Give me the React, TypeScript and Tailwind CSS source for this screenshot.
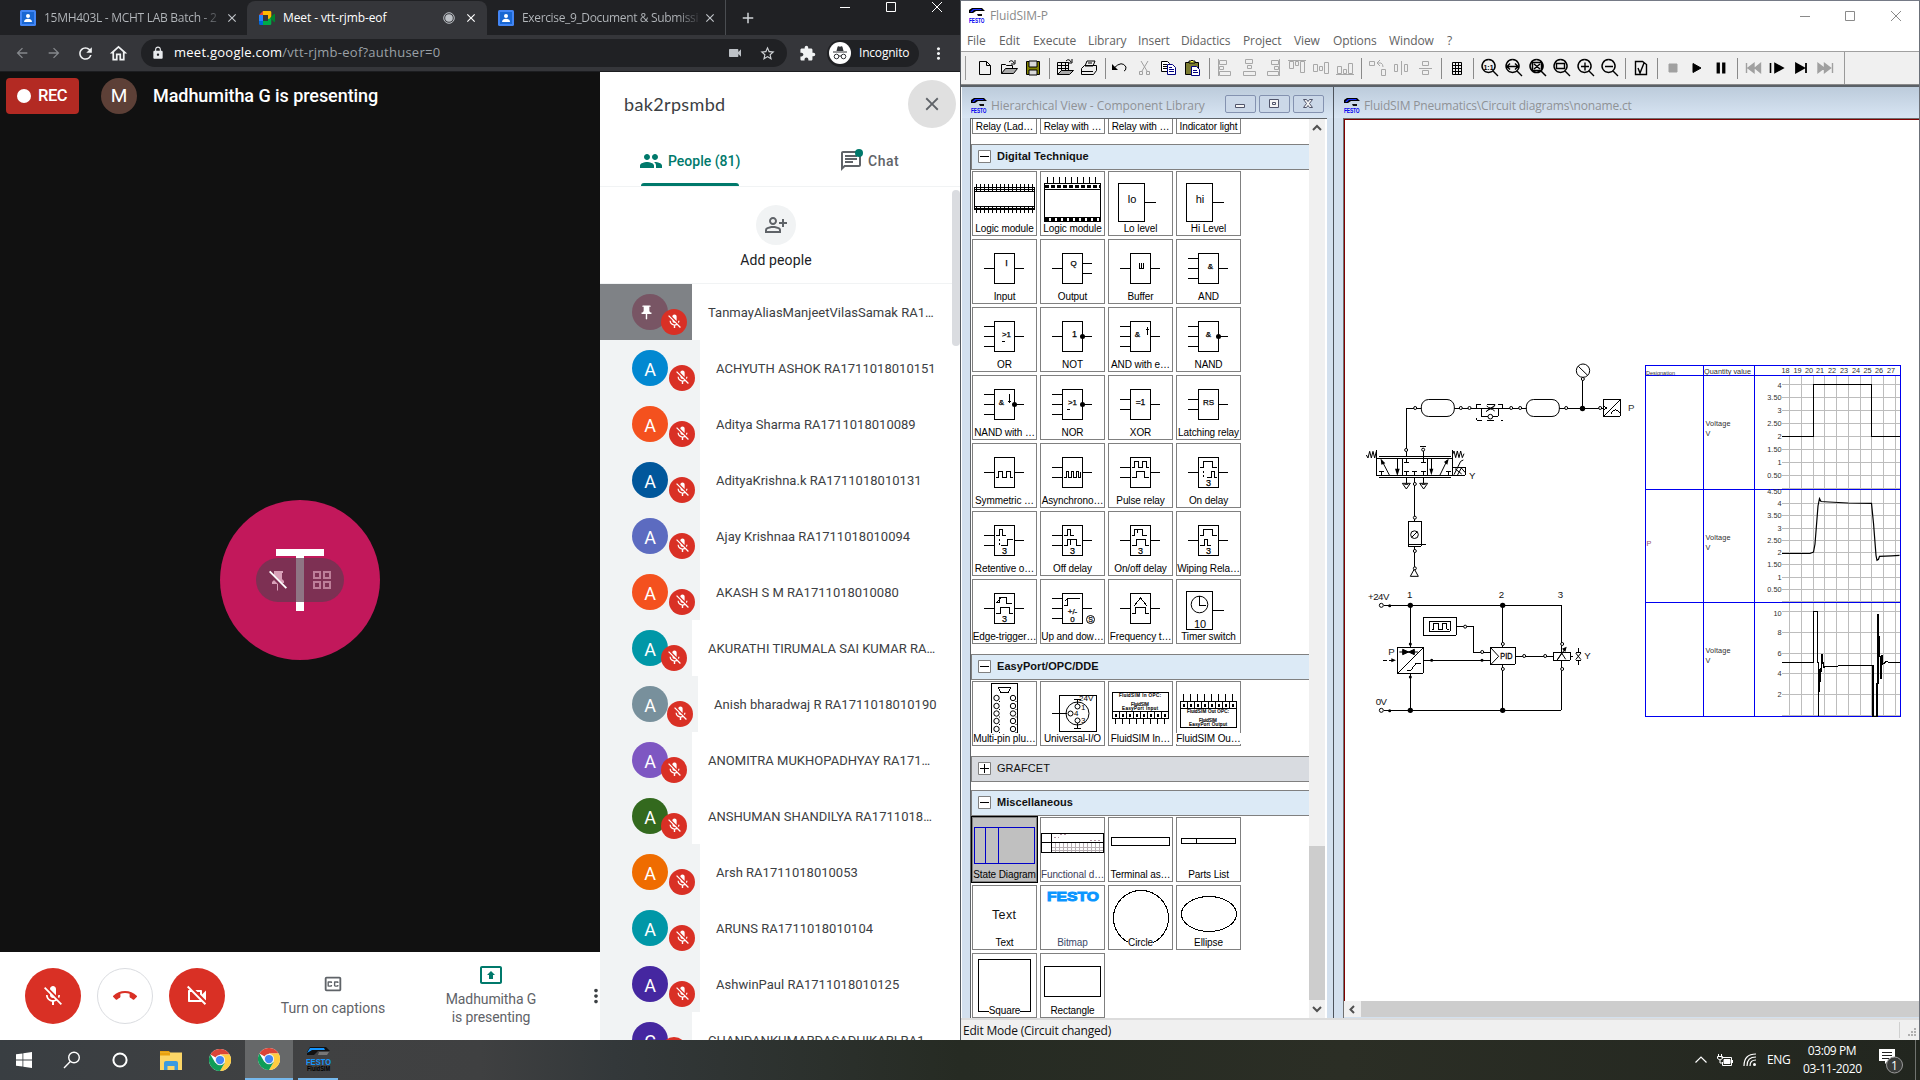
import React from 'react';
import {
  MdMicOff, MdPeople, MdCallEnd, MdOutlineVideocamOff, MdOutlineClosedCaption, MdOutlinePersonAddAlt,
  MdOutlineChat, MdExtension, MdStarBorder, MdLock, MdPushPin, MdClose, MdArrowBack, MdArrowForward,
  MdRefresh, MdOutlineHome, MdMoreVert, MdVideocam, MdAdd, MdOutlinePresentToAll,
} from 'react-icons/md';

/* ---------- shared logos ---------- */

function FestoLogo({ className = '' }: { className?: string }) {
  return (
    <svg className={`shrink-0 ${className}`} width="16" height="16" viewBox="0 0 16 16">
      <path d="M3 0h10l3 3h-9l-3 2H0v-3z" fill="#000" />
      <path d="M4 1h8l1 1H5l-2 2H1z" fill="#1a2fff" />
      <path d="M8 6h5v2H9z" fill="#111" />
      <text x="0" y="14.500" fontFamily="Liberation Sans" fontSize="7" fontWeight="700" fill="#0000f0" textLength="15.500" lengthAdjust="spacingAndGlyphs">FESTO</text>
    </svg>
  );
}

function ChromeLogo() {
  return (
    <svg width="22" height="22" viewBox="0 0 24 24">
      <circle cx="12" cy="12" r="12" fill="#fff" />
      <path d="M12 12L1.6 6A12 12 0 0 1 22.4 6H12z" fill="#db4437" />
      <path d="M22.4 6A12 12 0 0 1 12 24L17.2 15L12 6z" fill="#ffcd40" />
      <path d="M1.6 6A12 12 0 0 0 12 24L17.2 15L6.8 15z" fill="#0f9d58" />
      <circle cx="12" cy="12" r="5.6" fill="#f1f1f1" />
      <circle cx="12" cy="12" r="4.5" fill="#4285f4" />
    </svg>
  );
}

function ClassroomLogo() {
  return (
    <svg width="16" height="16" viewBox="0 0 16 16" className="shrink-0">
      <rect width="16" height="16" rx="1.5" fill="#4285f4" />
      <rect x="2" y="2" width="12" height="12" fill="#1967d2" />
      <circle cx="8" cy="6" r="2" fill="#fff" />
      <path d="M4 12c0-2.400 2-3.300 4-3.300s4 .9 4 3.300z" fill="#fff" />
    </svg>
  );
}

function MeetLogo() {
  return (
    <svg width="16" height="14" viewBox="0 0 16 14" className="shrink-0">
      <path d="M0 4l4-4v4z" fill="#ea4335" />
      <path d="M0 4h4v6H0z" fill="#2684fc" />
      <path d="M0 10h4v4H1.500Q0 14 0 12.500z" fill="#0066da" />
      <path d="M4 0h7q1.300 0 1.300 1.300V7L9 9V4H4z" fill="#ffba00" />
      <path d="M4 14v-4h5V8l3.300-1v5.700q0 1.300-1.300 1.300z" fill="#00ac47" />
      <path d="M11 7l4-4q1-.5 1 .5v7q0 1-1 .5z" fill="#00832d" />
    </svg>
  );
}

/* ---------- browser ---------- */

function Tab({ icon, title, className, fade = false }: { icon: React.ReactNode; title: string; className: string; fade?: boolean }) {
  return (
    <div className={`flex items-center ${className}`}>
      {icon}
      <span className={`ml-2 flex-1 overflow-hidden whitespace-nowrap ${fade ? 'bg-gradient-to-r from-[#b4b8bc] from-88% to-[#3a3c40] bg-clip-text text-transparent' : ''}`}>{title}</span>
    </div>
  );
}

function BrowserHeader() {
  return (
    <div className="h-[72px] shrink-0 bg-[#202124] font-['Open_Sans',sans-serif] text-[12px] tracking-[-0.35px] text-[#9aa0a6]">
      <div className="flex h-[35px]">
        <div className="flex w-[247px] items-center pl-5 pr-[7px]">
          <Tab fade className="w-[200px] tracking-[-0.28px]" icon={<ClassroomLogo />} title="15MH403L - MCHT LAB Batch - 2" />
          <MdClose className="ml-[5px] text-[#c0c4c8]" size={14} />
        </div>
        <div className="mt-px flex w-[240px] items-center rounded-t-lg bg-[#35363a] pl-[12px] text-white">
          <Tab className="w-[184px] tracking-[-0.1px]" icon={<MeetLogo />} title="Meet - vtt-rjmb-eof" />
          <svg width="12" height="12" viewBox="0 0 12 12"><circle cx="6" cy="6" r="5.300" fill="none" stroke="#bdc1c6" /><circle cx="6" cy="6" r="3.800" fill="#bdc1c6" /></svg>
          <MdClose className="ml-[9px]" size={14} />
        </div>
        <div className="flex w-[239px] items-center border-r border-[#4a4d51] pl-[11px]">
          <Tab fade className="w-[200px]" icon={<ClassroomLogo />} title="Exercise_9_Document &amp; Submissi" />
          <MdClose className="ml-[5px] text-[#c0c4c8]" size={14} />
        </div>
        <MdAdd className="ml-[13px] mt-[9px] text-[#d0d3d6]" size={18} />
        <svg className="ml-[83px] mt-[1px]" width="105" height="14" viewBox="0 0 105 14" stroke="#fff" fill="none">
          <path d="M0 6.500h10M46.500 1.500h9v9h-9zM92 1l10 10M102 1l-10 10" />
        </svg>
      </div>
      <div className="flex h-[37px] items-center border-b border-[#1c1d20] bg-[#35363a] pl-[14px]">
        <MdArrowBack size={16} className="text-[#85888c]" />
        <MdArrowForward size={16} className="ml-4 text-[#85888c]" />
        <MdRefresh size={19} className="ml-[14px] text-[#f1f3f4]" />
        <MdOutlineHome size={21} className="ml-[13px] text-[#f1f3f4]" />
        <div className="ml-[12px] flex h-7 w-[646px] items-center rounded-full bg-[#202124] pl-[10px] pr-[11px]">
          <MdLock size={14} className="text-[#e8eaed]" />
          <span className="ml-[9px] flex-1 text-[13px] tracking-[0.25px] text-[#9aa0a6]"><span className="text-white">meet.google.com</span>/vtt-rjmb-eof?authuser=0</span>
          <MdVideocam size={16} className="text-[#bdc1c6]" />
          <MdStarBorder size={17} className="ml-[16px] text-[#d0d3d6]" />
        </div>
        <MdExtension size={17} className="ml-[12px] text-[#f1f3f4]" />
        <div className="ml-[11px] flex h-[27px] w-[92px] items-center rounded-full bg-[#202124] pl-[2px] text-white">
          <svg width="22" height="22" viewBox="0 0 22 22">
            <circle cx="11" cy="11" r="11" fill="#fff" />
            <path d="M7.500 9l1-4q.3-1 1-.7l1.500.5 1.500-.5q.7-.3 1 .7l1 4zM4 9.500h14v1H4z" fill="#303236" />
            <g fill="none" stroke="#303236"><circle cx="7.500" cy="14.500" r="2.300" /><circle cx="14.500" cy="14.500" r="2.300" /><path d="M9.500 14h3" /></g>
          </svg>
          <span className="ml-2 tracking-[-0.2px]">Incognito</span>
        </div>
        <MdMoreVert size={19} className="ml-[10px] text-[#f1f3f4]" />
      </div>
    </div>
  );
}

const people: [string, string, string, string][] = [
  ['ACHYUTH ASHOK RA1711018010151', 'A', 'bg-[#0288d1]', 'w'],
  ['Aditya Sharma RA1711018010089', 'A', 'bg-[#f4511e]', 'w'],
  ['AdityaKrishna.k RA1711018010131', 'A', 'bg-[#01579b]', 'w'],
  ['Ajay Krishnaa RA1711018010094', 'A', 'bg-[#5c6bc0]', 'w'],
  ['AKASH S M RA1711018010080', 'A', 'bg-[#f4511e]', 'w'],
  ['AKURATHI TIRUMALA SAI KUMAR RA…', 'A', 'bg-[#0097a7]', 'n'],
  ['Anish bharadwaj R RA1711018010190', 'A', 'bg-[#78909c]', 'm'],
  ['ANOMITRA MUKHOPADHYAY RA171…', 'A', 'bg-[#7e57c2]', 'n'],
  ['ANSHUMAN SHANDILYA RA1711018…', 'A', 'bg-[#33691e]', 'n'],
  ['Arsh RA1711018010053', 'A', 'bg-[#ef6c00]', 'w'],
  ['ARUNS RA1711018010104', 'A', 'bg-[#0097a7]', 'w'],
  ['AshwinPaul RA1711018010125', 'A', 'bg-[#4527a0]', 'w'],
  ['CHANDANKUMARDASADHIKARI RA1…', 'C', 'bg-[#4527a0]', 'n'],
];

const slotWidth: Record<string, string> = { w: 'w-[100px]', m: 'w-[98px]', n: 'w-[92px]' };
const slotOverlap: Record<string, string> = { w: 'ml-[1px]', m: '-ml-[1px]', n: '-ml-[7px]' };

function MutedBadge({ className }: { className: string }) {
  return (
    <span className={`mt-[19px] flex size-[26px] shrink-0 items-center justify-center rounded-full bg-[#d93025] text-white ${className}`}>
      <MdMicOff size={17} />
    </span>
  );
}

function PeoplePanel() {
  return (
    <div className="flex w-[360px] shrink-0 flex-col overflow-hidden bg-white font-[Roboto,sans-serif]">
      <div className="flex h-[64px] shrink-0 items-center justify-between pl-6 pr-1">
        <span className="font-[Lato,sans-serif] text-[18px] tracking-[0.35px] text-[#3c4043]">bak2rpsmbd</span>
        <span className="flex size-12 items-center justify-center rounded-full bg-[#e0e0e0] text-[#5f6368]"><MdClose size={22} /></span>
      </div>
      <div className="flex h-[51px] shrink-0 border-b border-[#f1f3f4] text-[14px] font-medium">
        <div className="ml-[41px] flex w-[98px] flex-col text-[#00796b]">
          <div className="flex h-[47px] items-center whitespace-nowrap pt-[3px]">
            <MdPeople size={24} className="-ml-[2px] shrink-0" />
            <span className="ml-[5px]">People (81)</span>
          </div>
          <div className="h-[3px] rounded-t bg-[#00796b]" />
        </div>
        <div className="relative ml-[100px] flex h-[47px] items-center pt-[3px] text-[#5f6368]">
          <MdOutlineChat size={24} />
          <span className="absolute left-[16px] top-[13px] size-2 rounded-full bg-[#00796b]" />
          <span className="ml-[5px] tracking-[0.5px]">Chat</span>
        </div>
      </div>
      <div className="flex min-h-0 flex-1">
        <div className="w-[352px] overflow-hidden">
          <div className="flex h-[97px] flex-col items-center border-b border-[#f1f3f4] pt-[18px] text-[14px] text-[#202124]">
            <span className="flex size-10 items-center justify-center rounded-full bg-[#f1f3f4] text-[#5f6368]"><MdOutlinePersonAddAlt size={24} /></span>
            <span className="mt-[5px] tracking-[0.1px]">Add people</span>
          </div>
          <div className="flex h-14 items-center">
            <div className="flex h-14 w-[92px] items-center bg-[#7f8286] pl-8">
              <span className="flex size-9 shrink-0 items-center rounded-full bg-[#785564] pl-1.5 text-white"><MdPushPin size={17} /></span>
              <MutedBadge className="-ml-[7px]" />
            </div>
            <span className="ml-4 mt-[2px] whitespace-nowrap text-[13px] tracking-[0.02px] text-[#3c4043]">TanmayAliasManjeetVilasSamak RA1…</span>
          </div>
          {people.map(([name, letter, color, kind]) => (
            <div key={name} className="flex h-14 items-center">
              <div className={`flex h-14 shrink-0 items-center bg-[#f1f3f4] pl-8 ${slotWidth[kind]}`}>
                <span className={`flex size-9 shrink-0 items-center justify-center rounded-full pt-[2px] text-[18px] text-white ${color}`}>{letter}</span>
                <MutedBadge className={slotOverlap[kind]} />
              </div>
              <span className="ml-4 mt-[2px] whitespace-nowrap text-[13px] tracking-[0.02px] text-[#3c4043]">{name}</span>
            </div>
          ))}
        </div>
        <div className="mt-[3px] h-[156px] w-2 rounded-full bg-[#dadce0]" />
      </div>
    </div>
  );
}

function Browser() {
  return (
    <div className="flex w-[960px] shrink-0 flex-col bg-white">
      <BrowserHeader />
      <div className="flex min-h-0 flex-1">
        <div className="flex w-[600px] shrink-0 flex-col font-[Roboto,sans-serif]">
          <div className="flex h-[880px] flex-col bg-[#111]">
            <div className="flex items-center pl-1.5 pt-1.5 text-white">
              <span className="flex h-9 w-[73px] items-center rounded bg-[#b32a23] pl-[11px] text-[16.5px] font-medium tracking-[-0.5px]">
                <span className="mr-[7px] size-[14px] rounded-full bg-white" />REC
              </span>
              <span className="ml-[22px] flex size-9 items-center justify-center rounded-full bg-[#5d4037] text-[19px]">M</span>
              <span className="-mt-[2px] ml-[16px] text-[18px] font-medium tracking-[-0.06px]">Madhumitha G is presenting</span>
            </div>
            <div className="flex flex-1 items-center justify-center pt-[94px]">
              <div className="relative flex size-40 items-center justify-center rounded-full bg-[#c2185b]">
                <svg width="52" height="62" viewBox="0 0 52 62"><path d="M2 0h48v7H30v55h-8V7H2z" fill="#fff" /></svg>
                <div className="absolute flex h-11 w-[88px] items-center justify-between rounded-full bg-[#5f3a50]/70 pl-[10px] pr-[12px] text-[#d9a0b8]">
                  <svg width="24" height="24" viewBox="0 0 24 24" fill="currentColor"><path d="M8 3h9v2h-1v6l2 2v2h-2L8 7zM7 11l5 5v6l-.5 1-.5-1v-6H6v-2l2-2z" /><path d="M3 4l1.300-1.300L21 19.400 19.700 20.700z" fill="#fff" /></svg>
                  <svg width="20" height="20" viewBox="0 0 20 20" fill="none" stroke="currentColor" strokeWidth="2"><path d="M2 2h6v6H2zM12 2h6v6h-6zM2 12h6v6H2zM12 12h6v6h-6z" opacity=".7" /></svg>
                </div>
              </div>
            </div>
          </div>
          <div className="relative flex h-[88px] bg-white text-[14px] text-[#5f6368]">
            <div className="flex items-center gap-4 pl-[25px]">
              <span className="flex size-14 items-center justify-center rounded-full bg-[#d93025] text-white"><MdMicOff size={24} /></span>
              <span className="flex size-14 items-center justify-center rounded-full border border-[#dadce0] text-[#d93025]"><MdCallEnd size={24} /></span>
              <span className="flex size-14 items-center justify-center rounded-full bg-[#d93025] text-white"><MdOutlineVideocamOff size={24} /></span>
            </div>
            <div className="ml-[48px] flex w-[120px] flex-col items-center pt-[21px]">
              <MdOutlineClosedCaption size={22} />
              <span className="mt-[3px] whitespace-nowrap">Turn on captions</span>
            </div>
            <div className="ml-[38px] flex w-[120px] flex-col items-center pt-[11px] text-center leading-[18px]">
              <MdOutlinePresentToAll size={24} className="text-[#00796b]" />
              <span className="mt-[3px] tracking-[-0.1px]">Madhumitha G<br />is presenting</span>
            </div>
            <MdMoreVert size={22} className="absolute -right-[7px] top-[33px] text-[#3c4043]" />
          </div>
        </div>
        <PeoplePanel />
      </div>
    </div>
  );
}

/* ---------- FluidSIM toolbar ---------- */

const mag = 'M11.500 3.500a6.500 6.500 0 1 0 .1 0M16 15l5 5';
const tools: (string | { d: string; c?: string; f?: string; w?: number; t?: string; extra?: React.ReactNode })[] = [
  { d: 'M6.500 5.500h7l4 4v9h-11zM13.500 5.500v4h4' },
  { d: 'M4.500 17.500v-9h4l1 1h6v3M12 6q3-3 5 1M18 4v4h-4', extra: <path d="M4.500 17.500l4-5h12l-4 5z" fill="#a9a9a9" stroke="#000" /> },
  { d: 'M5.500 5.500h13v13h-13z', f: '#808000', extra: <path d="M8 5h8v6H8zM8 14h8v5H8z" fill="#d8d8d8" stroke="#000" /> },
  '|',
  { d: 'M4.500 18.500v-12h11v12M4.500 9.500h11M4.500 12.500h11M8.500 6.500v9M12.500 6.500v9M13 5q3-3 5 1M19 3v4h-4', extra: <path d="M4.500 18.500l4-4h12l-4 4z" fill="#a9a9a9" stroke="#000" /> },
  { d: 'M8 10l2-5h8l-2 5zM4.500 12.500l3-3h12v5l-3 4h-12zM5 15.500h11M11 7h4', f: '#eee' },
  '|',
  { d: 'M5 12q8-8 12-1 0 4-2 4', extra: <path d="M3 8v6h6z" fill="#000" stroke="none" /> },
  { d: 'M8 5l6 10M15 5L9 15M6.500 15.500h3v3h-3zM13.500 15.500h3v3h-3z', c: '#a0a0a0' },
  { d: 'M4.500 5.500h6l2 2v8h-8zM6 8.500h4M6 10.500h5M6 12.500h5', f: '#fff', extra: <path d="M10.500 8.500h5l3 3v7h-8zM12 11.500h3M12 13.500h5M12 15.500h5" fill="#fff" stroke="#000080" /> },
  { d: 'M4.500 6.500h13v12h-13z', f: '#7a7a30', extra: <><path d="M8 7h6V5h-2l-1-1-1 1H8z" fill="#ffff50" stroke="#000" /><path d="M10.500 10.500h5l3 3v6h-8zM12 14.500h4M12 16.500h5" fill="#fff" stroke="#000080" /></> },
  '|',
  { d: 'M5.500 3v17M6.500 4.500h7v4h-7zM6.500 10.500h4v3h-4zM6.500 15.500h11v4h-11z', c: '#a8a8a8' },
  { d: 'M8.500 3.500h7v4h-7zM10.500 9.500h4v3h-4zM6.500 15.500h12v4h-12z', c: '#a8a8a8' },
  { d: 'M18.500 3v17M10.500 4.500h7v4h-7zM13.500 10.500h4v3h-4zM6.500 15.500h11v4h-11z', c: '#a8a8a8' },
  { d: 'M3 4.500h18M4.500 5.500h4v7h-4zM10.500 5.500h3v4h-3zM15.500 5.500h4v11h-4z', c: '#a8a8a8' },
  { d: 'M4.500 8.500h4v7h-4zM10.500 10.500h3v4h-3zM15.500 6.500h4v11h-4z', c: '#a8a8a8' },
  { d: 'M3 18.500h18M4.500 10.500h4v7h-4zM10.500 13.500h3v4h-3zM15.500 7.500h4v10h-4z', c: '#a8a8a8' },
  '|',
  { d: 'M4.500 5.500h5v4h-5zM16.500 13.500h4v6h-4zM13 7h3q2 1 2 4M15 4l-3 3 3 3', c: '#a8a8a8' },
  { d: 'M5.500 8.500h3v7h-3zM12.500 5v14M15.500 8.500h3v7h-3z', c: '#a8a8a8' },
  { d: 'M9.500 5.500h6v4h-6zM6 12.500h13M9.500 14.500h6v4h-6z', c: '#a8a8a8' },
  '|',
  { d: 'M7.500 6.500h9v12h-9zM7 9.500h10M7 12.500h10M7 15.500h10M10.500 6v12M13.500 6v12' },
  '|',
  { d: mag, w: 1.4, t: '1:1' },
  { d: mag + 'M6 10.500h11M9 7.500l-3 3 3 3M14 7.500l3 3-3 3', w: 1.4 },
  { d: mag + 'M7.500 6.500h9v8h-9zM9 8l6 5M15 8l-6 5', w: 1.5 },
  { d: mag + 'M7.500 7.500h8v5h-8z', w: 1.4 },
  { d: mag + 'M8 10.500h8M12 6.500v8', w: 1.4 },
  { d: mag + 'M8 10.500h8', w: 1.4 },
  '|',
  { d: 'M6.500 5.500h7l4 3v10h-11zM9 12l2 5 4-10', w: 1.4 },
  '|',
  { d: 'M8 8h8v8H8z', c: '#a0a0a0', f: '#a0a0a0' },
  { d: 'M8 7.500v9l8-4.500z', f: '#000' },
  { d: 'M8.500 7.500h1.500v9H8.500zM14 7.500h1.500v9H14z', f: '#000', w: 1.8 },
  '|',
  { d: 'M5.500 7v10M13 7.500v9L7 12zM19.500 7.500v9L14 12z', c: '#a0a0a0', f: '#a0a0a0', w: 1.4 },
  { d: 'M5.500 7v10M10 7.500v9l8-4.500z', f: '#000', w: 1.6 },
  { d: 'M7 7.500v9l8-4.500zM17 7v10', f: '#000', w: 1.8 },
  { d: 'M5 7.500v9l6-4.500zM11.500 7.500v9l6-4.500zM19.500 7v10', c: '#a0a0a0', f: '#a0a0a0', w: 1.4 },
];

function Toolbar() {
  return (
    <div className="flex h-[32px] items-center bg-[#f0f0f0]">
      <div className="ml-[2px] mr-[7px] h-6 w-[3px] border-r border-[#999]" />
      {tools.map((t, i) =>
        typeof t === 'string' ? (
          <div key={i} className="flex w-2 justify-center"><div className="h-[21px] w-px bg-[#8a8a8a]" /></div>
        ) : (
          <svg key={i} width="24" height="24" viewBox="0 0 24 24" fill={t.f ?? 'none'} stroke={t.c ?? '#000'} strokeWidth={t.w ?? 1}>
            <path d={t.d} />
            {t.extra}
            {t.t && <text x="6.500" y="13.500" stroke="none" fill="#000" fontSize="8" fontFamily="Liberation Sans" fontWeight="700" textLength="10" lengthAdjust="spacingAndGlyphs">{t.t}</text>}
          </svg>
        ),
      )}
      <div className="ml-[7px] h-full w-px bg-[#999]" />
    </div>
  );
}

/* ---------- component library ---------- */

type Txt = [number, number, string, number?];
type Sym = { label: string; node: React.ReactNode; selected?: boolean; color?: string };

function gate(label: string, ins: number[], outs: number[], d = '', texts: Txt[] = [], extra: React.ReactNode = null): Sym {
  const wires = ins.map((y) => `M12 ${y}.5h10`).join('') + outs.map((y) => `M42 ${y}.5h10`).join('');
  return {
    label,
    node: (
      <>
        <path d={`M22.500 14.500h20v30h-20z${wires}${d}`} />
        {extra}
        {texts.map(([x, y, s, size], i) => (
          <text key={i} x={x} y={y} textAnchor="middle" fontSize={size ?? 9} fill="#000" stroke="#000" strokeWidth="0.25">{s}</text>
        ))}
      </>
    ),
  };
}

const dot = <circle cx="42.500" cy="29.500" r="2.500" fill="#000" stroke="none" shapeRendering="auto" />;
const teeth = (y: number, h: number, x0: number, n: number, step: number) =>
  Array.from({ length: n }, (_, i) => `M${x0 + i * step} ${y}v${h}`).join('');

const digital: Sym[] = [
  {
    label: 'Logic module',
    node: <path d={`M2.500 16.500h60v22h-60zM2.500 20.500h60M2.500 35.500h60M2.500 18.500h60M2.500 37.500h60${teeth(13, 7, 4.5, 15, 4)}${teeth(35, 7, 4.500, 15, 4)}`} />,
  },
  {
    label: 'Logic module',
    node: <><path d={`M4.500 12.500h56v38h-56zM4.500 18.500h56M4.500 46.500h56${teeth(6, 7, 7.500, 9, 6)}`} /><path strokeWidth="3" strokeDasharray="4 2" d="M5 15.500h55M5 48.500h55" /></>,
  },
  { label: 'Lo level', node: <><path d="M10.500 12.500h26v38h-26zM37 31.500h11" /><text x="24" y="32" textAnchor="middle" fontSize="11" fill="#000" stroke="none">lo</text></> },
  { label: 'Hi Level', node: <><path d="M10.500 12.500h26v38h-26zM37 31.500h11" /><text x="24" y="32" textAnchor="middle" fontSize="11" fill="#000" stroke="none">hi</text></> },
  gate('Input', [29], [29], '', [[34.5, 27, 'I']]),
  gate('Output', [29], [24, 34], '', [[33.5, 27, 'Q', 8]]),
  gate('Buffer', [29], [29], 'M31.500 24v6M33.500 24v6M35.500 24v6M31 29.500h5'),
  gate('AND', [19, 29, 39], [29], '', [[34.5, 30, '&', 8]]),
  gate('OR', [19, 29, 39], [29], 'M30 34.500h3', [[34.5, 30, '>1', 8]]),
  gate('NOT', [29], [29], '', [[34.5, 30, '1']], dot),
  gate('AND with e…', [19, 29, 39], [29], 'M39.500 28v-8M38 22.500h3', [[29.5, 30, '&', 8]]),
  gate('NAND', [19, 29, 39], [29], '', [[32.5, 30, '&', 8]], dot),
  gate('NAND with …', [19, 29, 39], [29], 'M37.500 19v9M36 26.500h3', [[29.5, 30, '&', 8]], dot),
  gate('NOR', [19, 29, 39], [29], 'M27 34.500h3', [[32.5, 30, '>1', 8]], dot),
  gate('XOR', [24, 34], [29], '', [[32.5, 30, '=1', 8.5]]),
  gate('Latching relay', [24, 34], [29], '', [[32.5, 30, 'RS', 8]]),
  gate('Symmetric …', [29], [29], 'M24 34.500h2.500v-6h4v6h4v-6h4v6h2'),
  gate('Asynchrono…', [24, 34], [29], 'M24 34.500h2.500v-6h2v6h3v-6h2v6h3v-6h2v6h2v-6'),
  gate('Pulse relay', [24, 34], [29], 'M24 24.500h2.500v-6h4v6h4v-6h4v6h2M24 34.500h4.500v-6h8v6h4'),
  gate('On delay', [29], [29], 'M24 24.500h3.500v-6h9v6h4M27.500 28v2M27.500 32v2M31 34.500h4.500v-6h3v6h2', [[32.5, 43, '3']]),
  gate('Retentive o…', [24, 34], [29], 'M24 24.500h3.500v-6h3v6h3M27.500 28v2M27.500 32v2M29 34.500h6.500v-6h5', [[32.5, 43, '3']]),
  gate('Off delay', [24, 34], [29], 'M24 24.500h3.500v-6h3v6h3M24 34.500h3.500v-6h9v6h4M30.500 28v6', [[32.5, 43, '3']]),
  gate('On/off delay', [29], [29], 'M24 24.500h2.500v-6h8v6h4M29.500 19v3M24 34.500h4.500v-6h9v6h3', [[32.5, 43, '3']]),
  gate('Wiping Rela…', [29], [29], 'M24 24.500h3.500v-6h9v6h4M24 34.500h4.500v-6h3v6h3', [[32.5, 43, '3']]),
  gate('Edge-trigger…', [29], [29], 'M24 23.500h3.500v-5h7v6h5M24 24l5-5M24 34.500h4.500v-6h9v6h3', [[32.5, 43, '3']]),
  gate('Up and dow…', [19, 29, 39], [29], 'M24 26.500h3v-7h13M25 22l4-3', [[32.5, 35, '+/-', 8], [32.5, 43, '0', 8], [50.5, 43, 'S', 7]], <circle cx="50.500" cy="40.500" r="4" shapeRendering="auto" />),
  gate('Frequency t…', [29], [29], 'M26 27l6.500-8 6.500 8M24 34.500h3.500v-6h10v6h3'),
  { label: 'Timer switch', node: <><path d="M10.500 12.500h26v38h-26zM37 31.500h11M23.500 17v9h6" /><circle cx="23.500" cy="25.500" r="8.300" shapeRendering="auto" /><text x="24" y="49" textAnchor="middle" fontSize="11" fill="#000" stroke="none">10</text></> },
];

const tiny = { fontSize: 4.5, fill: '#000', stroke: '#000', strokeWidth: 0.2, textAnchor: 'middle' as const };

const easyPort: Sym[] = [
  {
    label: 'Multi-pin plu…',
    node: <><path d="M19.500 52V2.500h26V52M26.500 6.500h12l-2 5h-8z" />{[17, 25, 32.5, 40, 48].map((y) => <g key={y} shapeRendering="auto"><circle cx="24.500" cy={y} r="2.700" /><circle cx="41" cy={y} r="2.700" /><path d={`M27.500 ${y + 3}v1M44 ${y + 3}v1`} /></g>)}</>,
  },
  {
    label: 'Universal-I/O',
    node: <><path d="M19.500 14.500h37v36h-37zM12 32.500h15M37.500 18v5M34 18.500h7M37.500 42v6M34 47.500h7" /><g shapeRendering="auto"><circle cx="37.500" cy="32.500" r="11.500" /><circle cx="37.500" cy="25.500" r="2.500" /><circle cx="30.500" cy="32.500" r="2.500" /><circle cx="37.500" cy="39.500" r="2.500" /></g><g fill="#000" stroke="none" fontSize="8"><text x="39" y="20">24V</text><text x="41" y="29">1</text><text x="34" y="35">4</text><text x="41" y="42">3</text></g></>,
  },
  {
    label: 'FluidSIM In…',
    node: <><path d={`M4.500 11.500h56v26h-56zM4.500 30.500h56${teeth(37, 6, 7.5, 8, 7)}${teeth(30, 7, 11.5, 7, 7)}`} /><path strokeWidth="3" strokeDasharray="2 5" d="M7 34.500h54" /><g {...tiny}><text x="32" y="16" textLength="42">FluidSIM In OPC:</text><text x="32" y="25">FluidSIM</text><text x="32" y="29" textLength="36">EasyPort Input</text></g></>,
  },
  {
    label: 'FluidSIM Ou…',
    node: <><path d={`M4.500 20.500h56v26h-56zM4.500 27.500h56${teeth(13, 7, 7.5, 8, 7)}${teeth(20, 7, 11.5, 7, 7)}`} /><path strokeWidth="3" strokeDasharray="2 5" d="M7 24.500h54" /><g {...tiny}><text x="32" y="32" textLength="42">FluidSIM Out OPC:</text><text x="32" y="40.500">FluidSIM</text><text x="32" y="44.500" textLength="38">EasyPort Output</text></g></>,
  },
];

const misc: Sym[] = [
  { label: 'State Diagram', selected: true, node: <path stroke="#0000c8" d="M2.500 10.500h60v36h-60zM13.500 10v36M26.500 10v36" /> },
  {
    label: 'Functional d…',
    color: 'text-[#40405a]',
    node: <><path stroke="#b8b0b4" d="M11 30.500h52M11 33.500h52M15.500 26v9M19.500 26v9M23.500 26v9M27.500 26v9M31.500 26v9M35.500 26v9M39.500 26v9M43.500 26v9M47.500 26v9M51.500 26v9M55.500 26v9M59.500 26v9" /><path d="M1.500 16.500h62v19h-62zM11.500 16v19M1 25.500h62" /><path stroke="#b090a0" strokeDasharray="2 2" d="M20 17.500h6M14 20.500h5M50 23.500h10" /></>,
  },
  { label: 'Terminal as…', node: <path d="M3.500 20.500h58v8h-58z" /> },
  { label: 'Parts List', node: <path d="M5.500 21.500h54v5h-54zM20.500 21v5" /> },
  { label: 'Text', node: <text x="32" y="34" fontSize="12.500" fill="#111" stroke="none" textAnchor="middle" textLength="24">Text</text> },
  { label: 'Bitmap', color: 'text-[#3a4a6a]', node: <text x="7" y="16" fontSize="13.500" fill="#0a96ff" stroke="#0a96ff" strokeWidth="1" fontWeight="700" textLength="52" lengthAdjust="spacingAndGlyphs">FESTO</text> },
  { label: 'Circle', node: <circle cx="33" cy="33" r="27.500" /> },
  { label: 'Ellipse', node: <ellipse cx="33" cy="29" rx="27.500" ry="17.500" /> },
  { label: 'Square', node: <path d="M6.500 6.500h52v52h-52z" /> },
  { label: 'Rectangle', node: <path d="M4.500 13.500h56v30h-56z" /> },
];

function Cell({ sym }: { sym: Sym }) {
  return (
    <div className={`relative size-[65px] ${sym.selected ? 'bg-[#c0c0c0] outline outline-1 outline-black' : 'bg-white'} border border-[#808080]`}>
      <svg className="absolute -left-px -top-px" width="65" height="65" viewBox="0 0 65 65" fill="none" stroke="#000" strokeWidth="1" shapeRendering="crispEdges" fontFamily="Liberation Sans">{sym.node}</svg>
      <div className={`absolute inset-x-0 bottom-[1px] flex justify-center whitespace-nowrap text-[10px] leading-[11px] tracking-[-0.1px] ${sym.color ?? 'text-black'}`}>
        <span className={sym.selected ? 'bg-[#c0c0c0]' : 'bg-white'}>{sym.label}</span>
      </div>
    </div>
  );
}

function Grid({ items }: { items: Sym[] }) {
  return (
    <div className="ml-px mt-px grid grid-cols-[repeat(4,65px)] gap-[3px]">
      {items.map((s, i) => <Cell key={i} sym={s} />)}
    </div>
  );
}

function SectionHeader({ title, open = true, className }: { title: string; open?: boolean; className: string }) {
  return (
    <div className={`flex h-[26px] shrink-0 items-center border-y border-l border-[#808080] pb-px pl-[6px] text-[11px] text-[#111] ${open ? 'bg-[#dceaf6] font-bold' : 'bg-[#d8dbe0]'} ${className}`}>
      <svg width="13" height="13" viewBox="0 0 13 13" fill="#fff" stroke="#808080"><path d="M.5.5h12v12H.5z" /><path stroke="#000" d={open ? 'M2 6.500h9' : 'M2 6.500h9M6.500 2v9'} /></svg>
      <span className="ml-[6px] tracking-[0.05px]">{title}</span>
    </div>
  );
}

function MdiButton({ kind, className }: { kind: 'min' | 'max' | 'close'; className: string }) {
  const d = { min: 'M10.500 9.500h9v3h-9z', max: 'M10.500 4.500h9v8h-9zM13.500 7.500h3v2h-3z', close: 'M10.500 4.500h3l1.500 2 1.500-2h3l-3 4 3 4h-3l-1.500-2-1.500 2h-3l3-4z' }[kind];
  return (
    <svg className={className} width="31" height="18" viewBox="0 0 31 18">
      <rect x=".5" y=".5" width="30" height="17" rx="1.500" fill="#cbd8e8" stroke="#8492b0" />
      <path d={d} fill="#f4f4f4" stroke="#50546a" />
    </svg>
  );
}

function LibraryWindow() {
  return (
    <div className="flex w-[372px] shrink-0 flex-col border-r border-[#4d535c] bg-[#d3e0ee]">
      <div className="flex h-[31px] items-center bg-gradient-to-b from-[#bccbdb] to-[#d8e5f3] pl-[9px] pt-[6px] font-['Open_Sans',sans-serif] text-[12px] text-[#8f9296]">
        <FestoLogo />
        <span className="ml-1 w-[234px] whitespace-nowrap tracking-[-0.02px]">Hierarchical View - Component Library</span>
        <MdiButton kind="min" className="-mt-[3px]" />
        <MdiButton kind="max" className="-mt-[3px] ml-[3px]" />
        <MdiButton kind="close" className="-mt-[3px] ml-[3px]" />
      </div>
      <div className="ml-[8px] mr-[6px] flex min-h-0 flex-1 border-l border-t border-[#606468] bg-white">
        <div className="flex w-[338px] flex-col overflow-hidden font-['Liberation_Sans',sans-serif]">
          <div className="ml-px flex h-[15px] shrink-0 gap-[3px] text-[10px] tracking-[-0.1px]">
            {['Relay (Lad…', 'Relay with …', 'Relay with …', 'Indicator light'].map((t, i) => (
              <div key={i} className="flex w-[65px] items-center justify-center whitespace-nowrap border-x border-b border-[#808080]">{t}</div>
            ))}
          </div>
          <SectionHeader title="Digital Technique" className="mt-[10px]" />
          <Grid items={digital} />
          <SectionHeader title="EasyPort/OPC/DDE" className="mt-[10px]" />
          <Grid items={easyPort} />
          <SectionHeader title="GRAFCET" open={false} className="mt-[10px]" />
          <SectionHeader title="Miscellaneous" className="mt-[8px]" />
          <Grid items={misc} />
        </div>
        <div className="flex w-[16px] flex-col items-center bg-[#f0f0f0]">
          <svg width="16" height="17" viewBox="0 0 16 17" fill="none" stroke="#505050" strokeWidth="2"><path d="M4 11l4-4 4 4" /></svg>
          <div className="mt-[710px] h-[154px] w-full bg-[#cdcdcd]" />
          <svg width="16" height="17" viewBox="0 0 16 17" fill="none" stroke="#505050" strokeWidth="2"><path d="M4 7l4 4 4-4" /></svg>
        </div>
      </div>
    </div>
  );
}

/* ---------- circuit diagram ---------- */

const ring = (x: number, y: number) => `M${x - 4} ${y}a4.500 4.500 0 1 0 9 0a4.500 4.500 0 1 0-9 0`;

/* The schematic is drawn in thirds of a pixel, so a stroke of 3 is one pixel wide. */
function Schematic() {
  return (
    <g transform="translate(1340 350) scale(.33333)" fill="none" stroke="#000" strokeWidth="3">
      <g shapeRendering="crispEdges">
        <path d="M199.500 318V175.500H244M343 175.500H560M658 175.500H790M727.500 175V84M790.500 148.500h51v51h-51zM790 199l51-51M812 193q14-26 28-3M790 168l12 6-12 6" />
        <path d="M411 175.500V163.500H424M440 163.500H466M475 163.500h12v12M411 205.500v6h16M440 211.500h22M484 211.500h6M424.500 175v25h20M457 199.500h18V175" />
        <path d="M109.500 300V376.500H337.500V300M109 325.500H337M117 319.500H333M117 382.500H333M187.500 325v51M262.500 325v51M199.500 325v12M192 337.500h15M250.500 300v37M243 337.500h15M241 289.500h16M116 364.500h16M124.500 364v12M192 364.500h16M199.500 364v12M217 364.500h14M223.500 364v12M242 364.500h16M250.500 364v12M318 364.500h16M325.500 364v12M172.500 325v45M274.500 325v45" />
        <path d="M199.500 382v18M250.500 382v18M223.500 382V514M205.500 514.500h39v75h-39zM205 583.500H258M223.500 589V655M337.500 352.500h39v24h-39z" />
        <path d="M132 766.500H664.500V1080.500H132M211.500 766V1080M487.500 766V892M487.500 943V1080" />
        <path d="M250.500 802.500h99v54h-99zM268.500 814.500h63v30h-63zM276 838.500h6v-18h13v18h13v-18h13v18h6M350 829.500H400.500V907.500H451" />
        <path d="M172.500 892.500h78v78h-78z" fill="#fff" />
        <path d="M172 970l78-78M250 931.500H451M200 961.500h12l16-22h14" />
        <path d="M451.500 892.500h75v51h-75zM526 918.500H640M692 919.500H700M715.500 893V907M715.500 932V945M709 907.500h14M709 931.500h14M128 931.500h12M146 931.500h12" />
        <path d="M640.500 907.500h51v24h-51z" fill="#fff" />
      </g>
      <g>
        <rect x="244" y="148.500" width="99" height="51" rx="22" fill="#fff" />
        <rect x="559" y="148.500" width="99" height="51" rx="22" fill="#fff" />
        <circle cx="729" cy="62" r="20" /><path d="M715 49L743 76" />
        <circle cx="451" cy="200" r="7" fill="#fff" />
        <path d="M438 185l28-20M440 168q12 12 24 0M440 183q12-12 24 0" />
        <path d="M148 375L124 329M300 375L322 330M342 374l20-40 8-4M352 376l12-22 12 14M345 356l20 16" />
        <path d="M79 315l5 9 5-20 5 20 5-20 5 20 5-20M337 315l5-12 5 20 5-20 5 20 5-20 5 20 5-12" />
        <path d="M187 400h24l-12 17zM239 400h24l-12 17zM193 403h12M245 403h12" />
        <path d="M223 657l-12 22h24zM212 554a11 11 0 1 0 23 0a11 11 0 1 0-23 0M215 562l17-17" />
        <path d="M452 893l24 26-24 25M650 932l26-36M653 928l12-19 12 19M707 909l16 20M723 909l-16 20" />
        <path d="M178 906h56" />
        <path d="M188 898l18 8-18 8zM223 898l-17 8 17 8z" fill="#000" />
        <g fill="#fff" stroke="#000">
          <path d={[[225, 174], [362, 174], [388, 174], [513, 174], [540, 174], [678, 174], [780, 174], [728, 87], [198, 300], [249, 299], [224, 402], [224, 503], [224, 603], [224, 655], [375, 830], [426, 906], [552, 918], [615, 918], [488, 882], [488, 957], [666, 882], [666, 957]].map(([x, y]) => ring(x, y)).join('')} />
          <circle cx="124" cy="766" r="6" /><circle cx="124" cy="1081" r="6" />
        </g>
        <g fill="#000" stroke="none">
          <circle cx="727.500" cy="175.500" r="8" /><circle cx="211" cy="766" r="8" /><circle cx="488" cy="766" r="8" /><circle cx="211" cy="1081" r="8" /><circle cx="488" cy="1081" r="8" />
          <circle cx="149" cy="767" r="4.500" /><circle cx="149" cy="1082" r="4.500" /><circle cx="211" cy="882" r="4.500" /><circle cx="211" cy="981" r="4.500" /><circle cx="275" cy="931" r="4.500" /><circle cx="426" cy="931" r="4.500" />
          <path d="M172 378l-7-22h14zM274 376l-6-20h12zM122 326l14 14-12 4zM326 326l-14 10 10 8zM168 931l-14-6v12zM680 890l-14 6 10 10z" />
        </g>
      </g>
      <g fill="#111" stroke="none" fontSize="29">
        <text x="864" y="183" fill="#333">P</text><text x="387" y="387">Y</text>
        <text x="84" y="750" textLength="64">+24V</text><text x="201" y="744">1</text><text x="476" y="744">2</text><text x="653" y="744">3</text>
        <text x="145" y="915" fill="#222">P</text><text x="107" y="1065" textLength="34">0V</text><text x="733" y="927">Y</text>
        <text x="481" y="927" fontSize="25" textLength="36" lengthAdjust="spacingAndGlyphs" stroke="#000" strokeWidth="1">PID</text>
      </g>
    </g>
  );
}

const vGrid = [1789.5, 1801.5, 1813.5, 1824.5, 1836.5, 1848.5, 1860.5, 1871.5, 1883.5, 1895.5];
const hGrid = [384.5, 397.5, 410.5, 423.5, 436.5, 449.5, 462.5, 475.5, 488.5, 503.5, 515.5, 528.5, 540.5, 552.5, 564.5, 577.5, 589.5, 601.5, 611.5, 632.5, 653.5, 673.5, 694.5, 715.5];
const yLabels: [string, number][] = [
  ['4', 388], ['3.50', 399.5], ['3', 412.5], ['2.50', 425.5], ['2', 438.5], ['1.50', 451.5], ['1', 464.5], ['0.50', 477.5],
  ['4.50', 494], ['4', 505.5], ['3.50', 517.5], ['3', 530.5], ['2.50', 542.5], ['2', 554.5], ['1.50', 566.5], ['1', 579.5], ['0.50', 591.5],
  ['10', 615.5], ['8', 634.5], ['6', 655.5], ['4', 675.5], ['2', 696.5],
];

function StateDiagram() {
  return (
    <g fill="none">
      <g shapeRendering="crispEdges">
        <path stroke="#bdbdbd" d={vGrid.map((x) => `M${x} 376V716`).join('') + hGrid.map((y) => `M1782 ${y}H1900`).join('')} />
        <path stroke="#0000f0" d="M1645.500 365.500h255v351h-255zM1703.500 365v351M1754.500 365v351M1645 375.500h255M1645 489.500h255M1645 602.500h255" />
      </g>
      <g stroke="#000" strokeWidth="1.200">
        <path shapeRendering="crispEdges" d="M1782 436.500h31.500v-52h58v52H1900" />
        <path d="M1782 553.500h28l3.500-1.500 1.500-8 3-38 1.500-7.500 1.500 3 8 .5 19 1 23.500.3 2 20 2.500 32 1 5 1.500-1 1-3 12-.5 8-.5" />
        <path shapeRendering="crispEdges" d="M1782 662.500h31.500v-51h4v51h1v53v-46h1v22l1-23 1 3 .5-17 1.500 13 2-1h12l1-1h34.500v51h4v-33h1v-70v23h1v20h2v22l1-23 .5 9 4-3 3 1H1900" />
      </g>
      <g fill="#303030" fontSize="7.300">
        {yLabels.map(([t, y], i) => <text key={i} x="1781.500" y={y} textAnchor="end">{t}</text>)}
        {[1785.5, 1797.5, 1809, 1820, 1832, 1844, 1856, 1867.5, 1879, 1891].map((x, i) => <text key={x} x={x} y="373" textAnchor="middle">{18 + i}</text>)}
        <text x="1646" y="375" fontSize="6" textLength="29" lengthAdjust="spacingAndGlyphs">Designation</text>
        <text x="1704" y="374" textLength="47">Quantity value</text>
        {[426, 539.5, 653].map((y) => <g key={y}><text x="1705.500" y={y} textLength="25">Voltage</text><text x="1705.500" y={y + 10}>V</text></g>)}
        <text x="1646.500" y="546" fill="#905070">P</text>
      </g>
    </g>
  );
}

function CircuitWindow() {
  return (
    <div className="flex flex-1 flex-col bg-[#d3e0ee]">
      <div className="flex h-[31px] items-center bg-gradient-to-b from-[#bccbdb] to-[#d8e5f3] pl-[10px] pt-[6px] font-['Open_Sans',sans-serif] text-[12px] tracking-[-0.17px] text-[#8f9296]">
        <FestoLogo />
        <span className="ml-1">FluidSIM Pneumatics\Circuit diagrams\noname.ct</span>
      </div>
      <div className="ml-[9px] flex min-h-0 flex-1 flex-col border-l border-t border-[#707070]">
        <div className="h-[882px] shrink-0 border-l border-t border-[#800000] bg-white">
          <svg width="573" height="881" viewBox="1345 120 573 881" fontFamily="Liberation Sans">
            <Schematic />
            <StateDiagram />
          </svg>
        </div>
        <div className="flex h-[16px] items-center bg-[#f0f0f0]">
          <svg width="17" height="15" viewBox="0 0 17 15" fill="none" stroke="#505050" strokeWidth="2"><path d="M10 4L6.500 7.500 10 11" /></svg>
          <div className="h-full flex-1 bg-[#cdcdcd]" />
        </div>
      </div>
    </div>
  );
}

function FluidSim() {
  return (
    <div className="flex w-[960px] flex-col border-l border-r border-t border-l-[#555a60] border-r-[#6b7078] border-t-[#757a86] bg-white">
      <div className="flex h-[29px] items-center pl-2 font-['Open_Sans',sans-serif] text-[12px] text-[#8a8a8a]">
        <FestoLogo />
        <span className="ml-[5px] flex-1 tracking-[-0.1px]">FluidSIM-P</span>
        <svg className="mr-[16px]" width="103" height="12" viewBox="0 0 103 12" fill="none" stroke="#8a8a8a"><path d="M0 6.500h10M45.500 1.500h9v9h-9zM91 1l10 10M101 1L91 11" /></svg>
      </div>
      <div className="flex h-[22px] items-center whitespace-nowrap border-b border-[#a0a0a0] pl-[6px] font-['Open_Sans',sans-serif] text-[12px] tracking-[-0.1px] text-[#626262]">
        <span className="w-[32px]">File</span>
        <span className="w-[34px]">Edit</span>
        <span className="w-[55px]">Execute</span>
        <span className="w-[50px]">Library</span>
        <span className="w-[43px]">Insert</span>
        <span className="w-[62px]">Didactics</span>
        <span className="w-[51px]">Project</span>
        <span className="w-[39px]">View</span>
        <span className="w-[56px]">Options</span>
        <span className="w-[58px]">Window</span>
        <span>?</span>
      </div>
      <Toolbar />
      <div className="h-[3px] border-t border-b-2 border-b-[#5a6066] border-t-[#8a8a8a] bg-[#777]" />
      <div className="flex h-[931px] pl-px">
        <LibraryWindow />
        <CircuitWindow />
      </div>
      <div className="flex flex-1 items-center border-t-2 border-[#dcdcdc] bg-[#f0f0f0] pl-[2px] font-['Open_Sans',sans-serif] text-[12px] text-[#111]">
        <span className="flex-1 pt-[2px] leading-none tracking-[-0.2px]">Edit Mode (Circuit changed)</span>
        <div className="h-4 w-px bg-[#d0d0d0]" />
        <svg className="ml-[8px] mr-[2px] mt-1" width="9" height="9" viewBox="0 0 9 9" fill="#b0b0b0"><path d="M6 0h2v2H6zM3 3h2v2H3zM6 3h2v2H6zM0 6h2v2H0zM3 6h2v2H3zM6 6h2v2H6z" /></svg>
      </div>
    </div>
  );
}

/* ---------- taskbar ---------- */

function Taskbar() {
  return (
    <div className="flex h-10 shrink-0 items-center bg-[linear-gradient(to_right,#393e42_0%,#404142_16%,#3f4041_25%,#33383a_32%,#262b23_50%,#2b2e25_70%,#22261f_100%)] font-['Open_Sans',sans-serif] text-[12px] text-white">
      <div className="flex w-12 justify-center"><svg width="16" height="16" viewBox="0 0 16 16" fill="#fff"><path d="M0 2.300L6.500 1.400V7.600H0zM7.300 1.300L16 0v7.600H7.300zM0 8.400h6.500v6.200L0 13.700zM7.300 8.400H16V16l-8.700-1.300z" /></svg></div>
      <div className="flex w-12 justify-center"><svg width="18" height="18" viewBox="0 0 18 18" fill="none" stroke="#fff" strokeWidth="1.400"><circle cx="11" cy="6.500" r="5.300" /><path d="M7.300 10.500L1 17" /></svg></div>
      <div className="flex w-12 justify-center"><svg width="16" height="16" viewBox="0 0 16 16" fill="none" stroke="#fff" strokeWidth="2"><circle cx="8" cy="8" r="6.600" /></svg></div>
      <div className="flex w-[54px] justify-center">
        <svg width="22" height="19" viewBox="0 0 22 19"><path d="M0 0h9l1.500 2H0z" fill="#e8a10e" /><path d="M0 1.500h22V19H0z" fill="#fcd667" /><path d="M0 1.500h10v3H0z" fill="#e8a10e" /><path d="M4 19v-7q0-2 2-2h10q2 0 2 2v7h-3.500v-4h-7v4z" fill="#3b9be0" /></svg>
      </div>
      <div className="flex w-[44px] justify-center"><ChromeLogo /></div>
      <div className="ml-[3px] flex h-10 w-[48px] items-center justify-center border-b-2 border-[#76b9ed] bg-[#666869]"><ChromeLogo /></div>
      <div className="ml-[5px] flex h-10 w-[40px] items-center justify-center border-b-2 border-[#76b9ed]">
        <svg width="25" height="28" viewBox="0 0 25 28">
          <path d="M4 2h16l4 4H12l-4 4H1V7z" fill="#111" /><path d="M4 3h14l1 2H6L1 8z" fill="#1496ff" /><path d="M13 7h10l-2 3h-9z" fill="#777" />
          <text x="0" y="19.500" fontFamily="Liberation Sans" fontSize="9" fontWeight="700" fill="#1496ff" textLength="25" lengthAdjust="spacingAndGlyphs">FESTO</text>
          <text x="1" y="25.500" fontFamily="Liberation Sans" fontSize="7" fontWeight="700" fill="#000" textLength="23" lengthAdjust="spacingAndGlyphs">FluidSIM</text>
        </svg>
      </div>
      <div className="flex-1" />
      <svg width="12" height="8" viewBox="0 0 12 8" fill="none" stroke="#fff" strokeWidth="1.200"><path d="M.5 6.500L6 1l5.500 5.500" /></svg>
      <svg className="ml-[10px]" width="16" height="13" viewBox="0 0 16 13" fill="none" stroke="#fff"><path d="M4.500 3.500h10v8h-9V8M15.500 6v3M.5 2.500h5v2q-2.500 3-5 0zM1.500 0v2M4.500 0v2M3 6v3h2" /><path d="M7 5.500h6v4H7z" fill="#fff" /></svg>
      <svg className="ml-[10px]" width="14" height="14" viewBox="0 0 14 14" fill="none" stroke="#fff" strokeWidth="1.200"><path d="M1 13Q1 1 13 1M4 13Q4 4 13 4M7 13q0-6 6-6" /><circle cx="11.500" cy="11.500" r="1.500" fill="#fff" stroke="none" /></svg>
      <span className="ml-[10px] w-[24px] tracking-[-0.3px]">ENG</span>
      <div className="ml-[12px] w-[58px] whitespace-nowrap text-center leading-[18px] tracking-[-0.4px]">03:09 PM<br />03-11-2020</div>
      <svg className="ml-[18px] mt-[2px]" width="25" height="26" viewBox="0 0 25 26">
        <path d="M0 1h16v12H9l-3 3v-3H0z" fill="#fff" /><path d="M3 4.500h10M3 7.500h10M3 10.500h7" stroke="#222" />
        <circle cx="15.500" cy="17" r="8" fill="#3a3c3a" stroke="#9a9a9a" />
        <text x="15.500" y="21.500" fontFamily="Open Sans" fontSize="12" textAnchor="middle" fill="#fff">1</text>
      </svg>
      <div className="ml-[11px] mr-1 h-10 w-px bg-[#70736f]" />
    </div>
  );
}

export default function App() {
  return (
    <div className="flex h-[1080px] w-[1920px] flex-col overflow-hidden bg-[#202124]">
      <div className="flex h-[1040px] shrink-0">
        <Browser />
        <FluidSim />
      </div>
      <Taskbar />
    </div>
  );
}
